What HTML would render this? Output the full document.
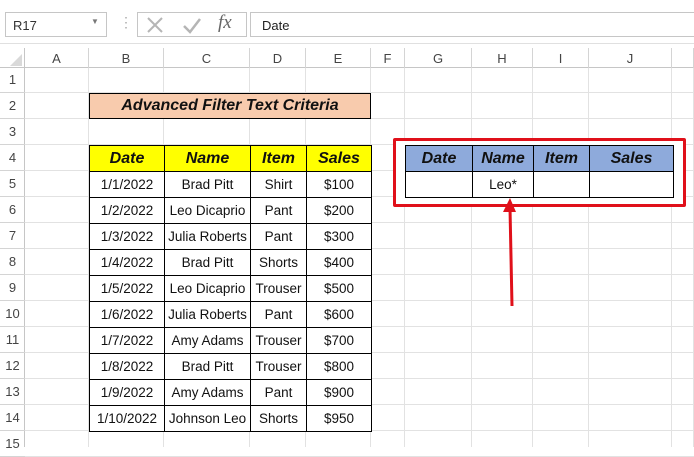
<!DOCTYPE html><html><head><style>
body{margin:0;width:694px;height:447px;overflow:hidden;background:#fff;font-family:"Liberation Sans",sans-serif;position:relative}
.a{position:absolute;box-sizing:border-box}
.c{position:absolute;box-sizing:border-box;display:flex;align-items:center;justify-content:center;font-size:13.5px;color:#111;white-space:nowrap}
.h{font-weight:bold;font-style:italic;font-size:16px}
</style></head><body>
<div class="a" style="left:0;top:0;width:694px;height:44px;background:#fff;border-bottom:1px solid #e0e0e0"></div>
<div class="a" style="left:5px;top:12px;width:102px;height:25px;border:1px solid #c6c6c6;font-size:13px;padding:5px 0 0 7px;color:#333">R17</div>
<div class="a" style="left:91px;top:17px;font-size:8px;color:#777">▼</div>
<div class="a" style="left:119px;top:14px;font-size:14px;color:#aaa">⋮</div>
<div class="a" style="left:137px;top:12px;width:110px;height:25px;border:1px solid #c6c6c6"></div>
<svg class="a" style="left:146px;top:16px" width="18" height="18"><path d="M2 2L16 16M16 2L2 16" stroke="#b5b5b5" stroke-width="2"/></svg>
<svg class="a" style="left:182px;top:16px" width="20" height="18"><path d="M2 10L8 16L18 3" stroke="#b5b5b5" stroke-width="2.5" fill="none"/></svg>
<div class="a" style="left:218px;top:12px;font-family:'Liberation Serif',serif;font-style:italic;font-size:19px;color:#666">fx</div>
<div class="a" style="left:250px;top:12px;width:444px;height:25px;border:1px solid #c6c6c6;border-right:none;font-size:13px;padding:5px 0 0 11px;color:#222">Date</div>
<div class="a" style="left:0;top:48px;width:694px;height:20px;background:#fff;border-bottom:1px solid #c6c6c6"></div>
<div class="a" style="left:0;top:48px;width:25px;height:399px;border-right:1px solid #c6c6c6"></div>
<svg class="a" style="left:10px;top:54px" width="12" height="12"><path d="M12 0L12 12L0 12Z" fill="#d9d9d9"/></svg>
<div id="g"></div>
<div class="c h" style="left:89px;top:93px;width:282px;height:26px;background:#f8cbad;border:1px solid #000">Advanced Filter Text Criteria</div>
<div id="t"></div>
<div class="a" style="left:393px;top:138px;width:293px;height:69px;border:3px solid #e0101a;border-radius:2px;background:#fff"></div>
<div id="t2"></div>
<svg class="a" style="left:500px;top:196px" width="20" height="112"><path d="M12 110L10 12" stroke="#e0101a" stroke-width="3"/><path d="M3 16L10 2L16 16Z" fill="#e0101a"/></svg>
<script>
const cols=[["A",25,89],["B",89,164],["C",164,250],["D",250,306],["E",306,371],["F",371,405],["G",405,472],["H",472,533],["I",533,589],["J",589,672],["",672,694]];
let h="";
cols.forEach(c=>{h+=`<div class="c" style="left:${c[1]}px;top:48px;width:${c[2]-c[1]}px;height:20px;border-right:1px solid #d4d4d4;color:#444;font-size:13px">${c[0]}</div>`;
h+=`<div class="a" style="left:${c[2]-1}px;top:68px;width:1px;height:379px;background:#e2e2e2"></div>`});
for(let r=1;r<=15;r++){let y=67+26*(r-1);
h+=`<div class="c" style="left:0;top:${y}px;width:25px;height:26px;border-bottom:1px solid #d4d4d4;color:#444;font-size:13px">${r}</div>`;
h+=`<div class="a" style="left:25px;top:${y+25}px;width:669px;height:1px;background:#e2e2e2"></div>`}
document.getElementById("g").innerHTML=h;
const d=[["1/1/2022","Brad Pitt","Shirt","$100"],["1/2/2022","Leo Dicaprio","Pant","$200"],["1/3/2022","Julia Roberts","Pant","$300"],["1/4/2022","Brad Pitt","Shorts","$400"],["1/5/2022","Leo Dicaprio","Trouser","$500"],["1/6/2022","Julia Roberts","Pant","$600"],["1/7/2022","Amy Adams","Trouser","$700"],["1/8/2022","Brad Pitt","Trouser","$800"],["1/9/2022","Amy Adams","Pant","$900"],["1/10/2022","Johnson Leo","Shorts","$950"]];
const xs=[89,164,250,306,371];let t="";
["Date","Name","Item","Sales"].forEach((s,i)=>t+=`<div class="c h" style="left:${xs[i]}px;top:145px;width:${xs[i+1]-xs[i]+1}px;height:27px;background:#ffff00;border:1px solid #000">${s}</div>`);
d.forEach((row,j)=>row.forEach((s,i)=>t+=`<div class="c" style="left:${xs[i]}px;top:${171+26*j}px;width:${xs[i+1]-xs[i]+1}px;height:27px;background:#fff;border:1px solid #000">${s}</div>`));
document.getElementById("t").innerHTML=t;
const x2=[405,472,533,589,673];let u="";
["Date","Name","Item","Sales"].forEach((s,i)=>{u+=`<div class="c h" style="left:${x2[i]}px;top:145px;width:${x2[i+1]-x2[i]+1}px;height:27px;background:#8eaadb;border:1px solid #000">${s}</div>`;
u+=`<div class="c" style="left:${x2[i]}px;top:171px;width:${x2[i+1]-x2[i]+1}px;height:27px;background:#fff;border:1px solid #000">${i==1?"Leo*":""}</div>`});
document.getElementById("t2").innerHTML=u;
</script>
</body></html>
